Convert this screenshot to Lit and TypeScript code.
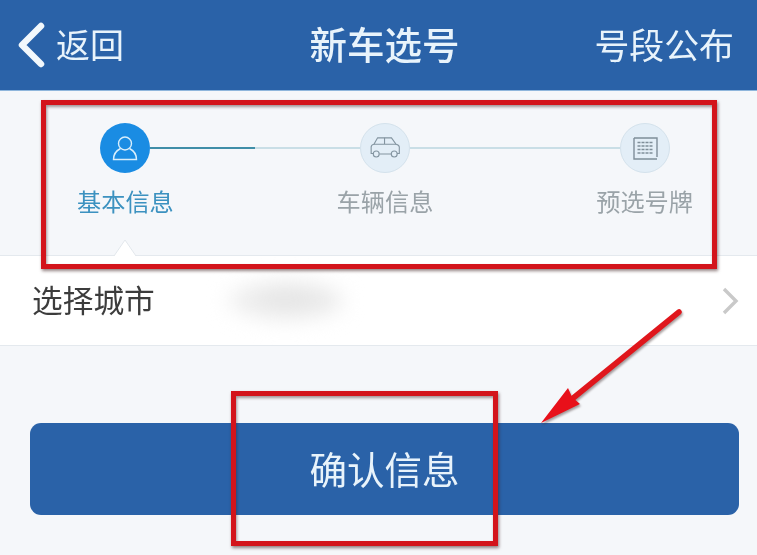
import { LitElement, html, css } from "lit";
import { customElement } from "lit/decorators.js";

@customElement("app-root")
export class AppRoot extends LitElement {
  static styles = css`
    :host {
      display: block;
      position: relative;
      width: 757px;
      height: 555px;
      overflow: hidden;
      background: #f5f7fa;
      font-family: "Noto Sans CJK SC", "Noto Sans", sans-serif;
      filter: blur(0.35px);
    }
    .header {
      height: 88px;
      background: #2a62a8;
      border-bottom: 1px solid #8fb6dc;
      box-sizing: content-box;
      display: grid;
      grid-template-columns: 1fr auto 1fr;
      align-items: center;
      color: #e8f3fb;
      padding: 0 23px 2px 17px;
    }
    .back { display: flex; align-items: center; gap: 11px; font-size: 34px; line-height: 1; }
    .back svg { display: block; margin-top: 2px; }
    .title { font-size: 37.5px; line-height: 1; margin: 0 0 2px 18px; font-weight: 500; }
    .right { justify-self: end; font-size: 34.9px; line-height: 1; }
    .stepper {
      position: relative;
      height: 164px;
      box-sizing: border-box;
      padding-top: 32px;
    }
    .track {
      display: flex;
      align-items: center;
      padding: 0 87px 0 100px;
    }
    .dot {
      width: 50px;
      height: 50px;
      border-radius: 50%;
      background: #e3eef7;
      border: 1px solid #d4e2ec;
      box-sizing: border-box;
      display: flex;
      align-items: center;
      justify-content: center;
      flex: none;
    }
    .dot.on { background: #1a8ce3; border: none; }
    .line { flex: 1; height: 2px; background: #c9dee6; }
    .line .fill { width: 50%; height: 100%; background: #3f8ea8; }
    .labels {
      display: flex;
      justify-content: space-between;
      padding: 13px 64px 0 77px;
      font-size: 24.2px;
      line-height: 30px;
      color: #9aa3a8;
    }
    .labels .on { color: #3c92c0; }
    .caret { position: absolute; left: 113px; bottom: -1px; display: block; }
    .row {
      height: 91px;
      box-sizing: border-box;
      background: #fff;
      border-top: 1px solid #e4e9ee;
      border-bottom: 1px solid #e4e9ee;
      display: flex;
      align-items: center;
      padding: 0 18px 0 32px;
      font-size: 30.7px;
      color: #3c3c3c;
    }
    .row .label { line-height: 1; position: relative; top: -1px; }
    .blurred {
      width: 118px;
      height: 40px;
      margin-left: 71px;
      border-radius: 50%;
      background: radial-gradient(ellipse at 55% 45%, #e2e2e2 0%, #eaeaea 40%, #f6f6f6 75%, #fff 100%);
      filter: blur(10px);
    }
    .row svg { margin-left: auto; display: block; }
    .action { padding: 77px 18px 0 30px; }
    .btn {
      height: 92px;
      border-radius: 11px;
      background: #2a62a8;
      color: #e8f3fb;
      display: flex;
      align-items: center;
      justify-content: center;
      font-size: 37.5px;
      line-height: 1;
      padding-bottom: 2px;
      box-sizing: border-box;
    }
    .mark {
      position: absolute;
      box-sizing: border-box;
      border: 5px solid #d3141b;
      box-shadow: 1px 2px 3px rgba(60, 30, 30, 0.55), inset 1px 2px 3px rgba(60, 30, 30, 0.45);
      pointer-events: none;
    }
    .mark.a { left: 41px; top: 100px; width: 676px; height: 169px; }
    .mark.b { left: 231px; top: 391px; width: 267px; height: 155px; }
    .arrow { position: absolute; left: 530px; top: 300px; display: block; filter: drop-shadow(1px 2px 1px rgba(60, 40, 40, 0.45)); }
  `;

  render() {
    return html`
      <div class="header">
        <div class="back">
          <svg width="28" height="46" viewBox="0 0 28 46" fill="none">
            <path d="M24 4 L5 23 L24 42" stroke="#f2f8fc" stroke-width="6.5" stroke-linecap="round" stroke-linejoin="round"/>
          </svg>
          <span>返回</span>
        </div>
        <div class="title">新车选号</div>
        <div class="right">号段公布</div>
      </div>
      <div class="stepper">
        <div class="track">
          <div class="dot on">
            <svg width="28" height="28" viewBox="0 0 28 28" fill="none" stroke="#d8eefc" stroke-width="1.4">
              <circle cx="14" cy="9.5" r="6.5"/>
              <path d="M9.5 14.5 C5.5 16.5 2.5 20 2.5 25.5 H25.5 C25.5 20 22.5 16.5 18.5 14.5"/>
            </svg>
          </div>
          <div class="line"><div class="fill"></div></div>
          <div class="dot">
            <svg width="32" height="24" viewBox="0 0 34 26" fill="none" stroke="#8394a0" stroke-width="1.2">
              <path d="M4 19 H2 V12 C2 10.5 3 9.5 5 9 L9 2 H24 L29 9 C31 9.5 32.5 10.5 32.5 12 V19 H30"/>
              <path d="M5 9 H29 M16.5 2 V9 M11 19.5 H24"/>
              <circle cx="7.5" cy="19.5" r="3.2"/>
              <circle cx="27" cy="19.5" r="3.2"/>
            </svg>
          </div>
          <div class="line"></div>
          <div class="dot">
            <svg width="25" height="23" viewBox="0 0 25 23" fill="none" stroke="#7f8e99" stroke-width="1.4">
              <path d="M1 1 H24 V20 M24 22 H1 V1"/>
              <path d="M4.5 5.5 H20.5 M4.5 9 H20.5 M4.5 12.5 H20.5 M4.5 16 H20.5" stroke-dasharray="3 1"/>
            </svg>
          </div>
        </div>
        <div class="labels">
          <span class="on">基本信息</span>
          <span>车辆信息</span>
          <span>预选号牌</span>
        </div>
        <svg class="caret" width="24" height="17" viewBox="0 0 24 17">
          <path d="M1 17 L12 1 L23 17 Z" fill="#fff"/>
          <path d="M1 17 L12 1 L23 17" fill="none" stroke="#e2e7ec" stroke-width="1"/>
        </svg>
      </div>
      <div class="row">
        <span class="label">选择城市</span>
        <div class="blurred"></div>
        <svg width="18" height="28" viewBox="0 0 18 28" fill="none">
          <path d="M3 2 L15 14 L3 26" stroke="#c9c9c9" stroke-width="3.4"/>
        </svg>
      </div>
      <div class="action">
        <div class="btn">确认信息</div>
      </div>
      <div class="mark a"></div>
      <div class="mark b"></div>
      <svg class="arrow" width="160" height="130" viewBox="530 300 160 130">
        <path d="M679 312 L572 399" stroke="#e0161c" stroke-width="5.5" stroke-linecap="round"/>
        <path d="M541 423 L568 388 L572 397 L580 404 Z" fill="#e8101a"/>
      </svg>
    `;
  }
}
